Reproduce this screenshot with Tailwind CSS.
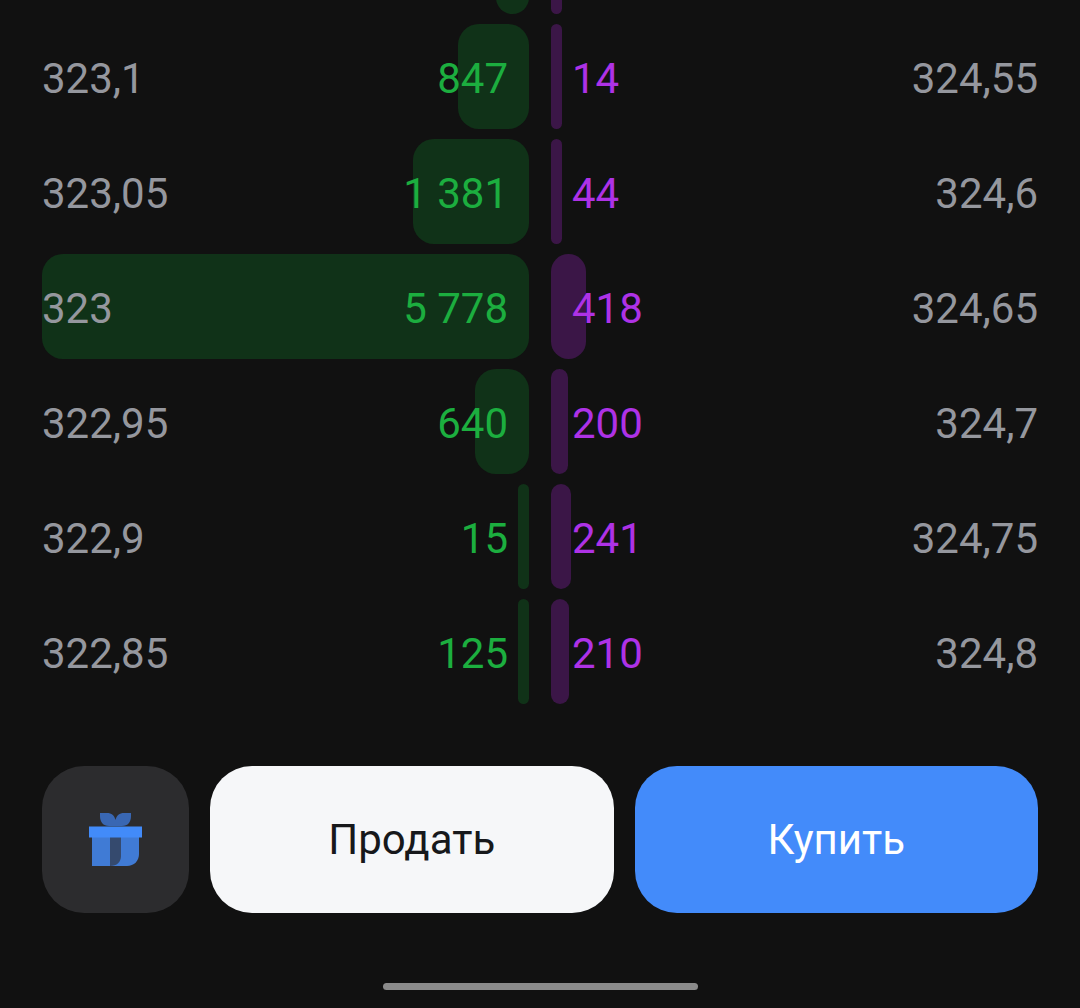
<!DOCTYPE html>
<html lang="ru">
<head>
    <meta charset="UTF-8">
    <meta name="viewport" content="width=device-width, initial-scale=1.0">
    <title>Стакан</title>
    <script src="https://cdn.jsdelivr.net/npm/@tailwindcss/browser@4"></script>
</head>
<body class="bg-[#111111] font-[Roboto,sans-serif] text-[42px] leading-[50px]">

    <div class="flex flex-col h-screen overflow-hidden px-[42px]">

        <!-- Стакан заявок -->
        <main class="flex-1 min-h-0 flex flex-col justify-end overflow-hidden">
            <table class="w-full table-fixed shrink-0" aria-label="Стакан заявок">
                <tbody id="orderBook"></tbody>
            </table>
        </main>

        <!-- Кнопки -->
        <div class="flex gap-[21px] mt-[57px]">
            <button type="button" aria-label="Подарок" class="flex items-center justify-center shrink-0 size-[147px] rounded-[42px] bg-[#2c2c2e]">
                <svg class="size-[53px]" viewBox="0 0 53 53" fill="none" aria-hidden="true">
                    <path d="M11 0H18C22.5 0 25.5 2.5 26.5 7C27.5 2.5 30.5 0 35 0H42V3C42 9 39 13 33 13H20C14 13 11 9 11 3Z" fill="#3967b3"/>
                    <path d="M3 24H50V41C50 48 45 53 38 53H3Z" fill="#407bd5"/>
                    <path d="M21 24H32V43C32 49 28 53 21 53Z" fill="#354a6e"/>
                    <path d="M0 13.500H53V24.500H0Z" fill="#428bf9"/>
                </svg>
            </button>
            <button type="button" class="flex-1 h-[147px] rounded-[42px] bg-[#f6f7f9] text-[#17181b]">Продать</button>
            <button type="button" class="flex-1 h-[147px] rounded-[42px] bg-[#438bfa] text-white">Купить</button>
        </div>

        <div class="w-[315px] h-[7px] mt-[70px] mb-[18px] mx-auto shrink-0 rounded-full bg-[#8b8b8b]"></div>
    </div>

    <script>
        // цена покупки, объём, объём, цена продажи
        const rows = [
            [323.1, 847, 14, 324.55],
            [323.05, 1381, 44, 324.6],
            [323, 5778, 418, 324.65],
            [322.95, 640, 200, 324.7],
            [322.9, 15, 241, 324.75],
            [322.85, 125, 210, 324.8]
        ];
        const max = Math.max(...rows.flatMap(r => [r[1], r[2]]));
        const fmt = n => n.toLocaleString('ru-RU');

        const row = (bidVol, askVol, bidText, bidVolText, askVolText, askText) => `
            <tr class="relative isolate h-[115px]">
                <td class="p-0 pt-1 text-[#95979e]">${bidText}</td>
                <td class="p-0 pt-1 pr-8 text-right text-[#1cae3f]">
                    <div class="absolute -z-10 inset-y-[5px] left-0 right-1/2 mr-[11px] flex justify-end">
                        <div class="min-w-[11px] rounded-[21px] bg-[#103218]" style="width: ${bidVol / max * 100}%"></div>
                    </div>
                    ${bidVolText}
                </td>
                <td class="p-0 pt-1 pl-8 text-left text-[#ae32e6]">
                    <div class="absolute -z-10 inset-y-[5px] right-0 left-1/2 ml-[11px] flex">
                        <div class="min-w-[11px] rounded-[21px] bg-[#3b1647]" style="width: ${askVol / max * 100}%"></div>
                    </div>
                    ${askVolText}
                </td>
                <td class="p-0 pt-1 text-right text-[#95979e]">${askText}</td>
            </tr>`;

        // верхняя строка прокручена, от неё остаётся только край полос
        document.getElementById('orderBook').innerHTML = row(392, 30, '', '', '', '') +
            rows.map(([bid, bidVol, askVol, ask]) =>
                row(bidVol, askVol, fmt(bid), fmt(bidVol), fmt(askVol), fmt(ask))).join('');
    </script>
</body>
</html>
